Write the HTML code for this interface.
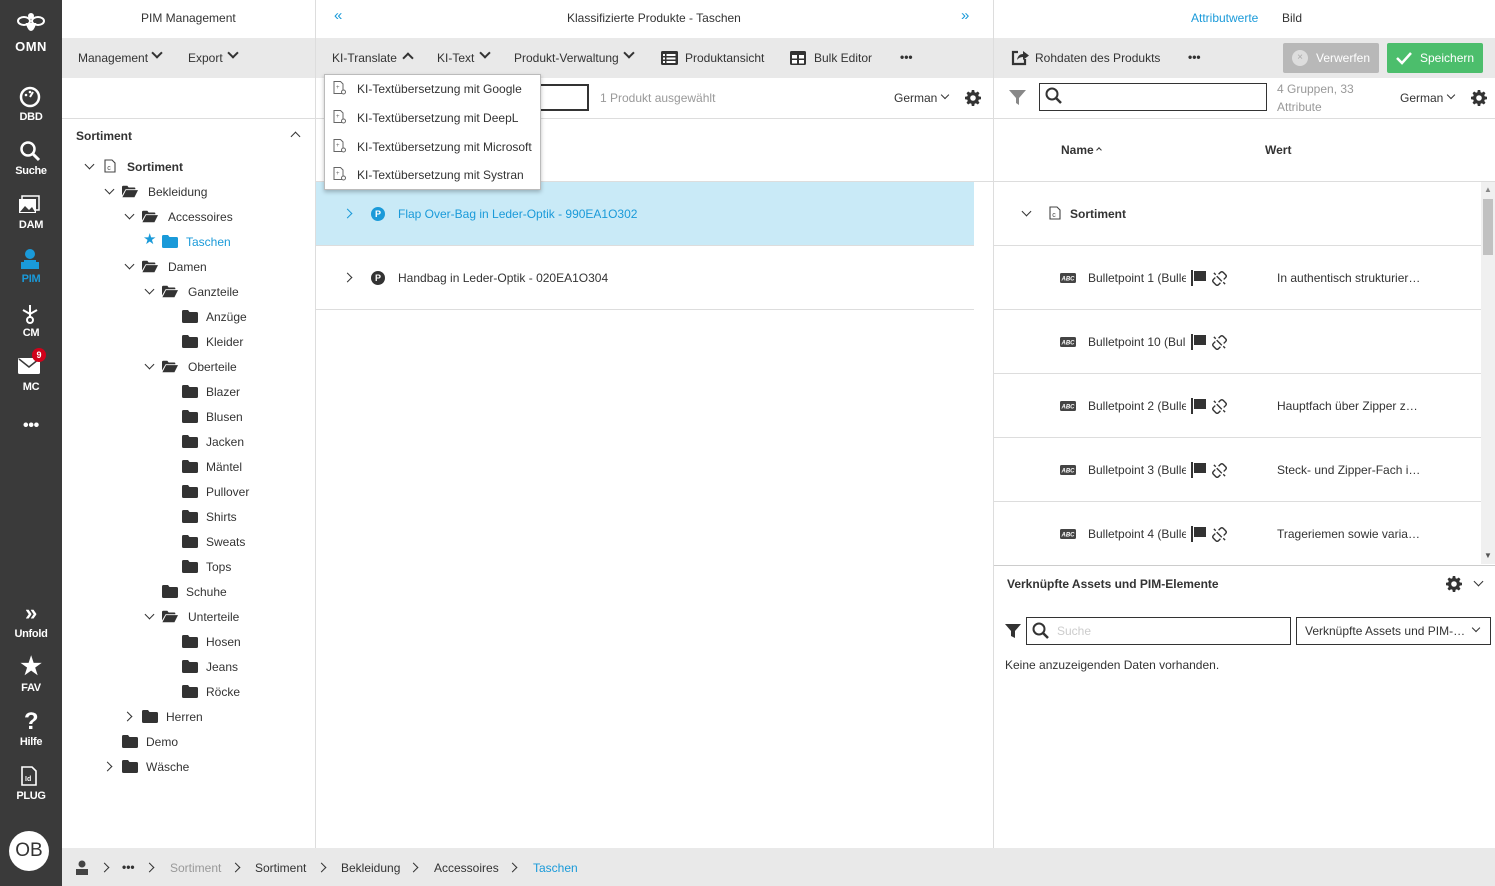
<!DOCTYPE html>
<html><head><meta charset="utf-8"><style>
*{box-sizing:border-box;margin:0;padding:0}
body{width:1495px;height:886px;overflow:hidden;font-family:"Liberation Sans",sans-serif;font-size:12px;color:#333;background:#fff;position:relative}
.a{position:absolute}
.sb{left:0;top:0;width:62px;height:886px;background:#3a3a3a;color:#fff}
.sbi{position:absolute;left:0;width:62px;text-align:center;font-size:11px;font-weight:bold;letter-spacing:-.3px}
.grey{background:#e9e9e9}
.t{position:absolute;white-space:nowrap;line-height:14px}
.fold{position:absolute;width:16px;height:13px}
.hl{position:absolute;height:1px;background:#ddd}
.vl{position:absolute;width:1px;background:#ddd}
.chev{position:absolute;width:7px;height:7px;border-right:1.6px solid #333;border-bottom:1.6px solid #333}
.down{transform:rotate(45deg)}
.right{transform:rotate(-45deg)}
.tb{width:8px;height:8px;border-right:2.2px solid #333;border-bottom:2.2px solid #333}
</style></head><body>
<svg width="0" height="0" style="position:absolute"><defs>
<symbol id="fc" viewBox="0 0 16 13"><path d="M0 1.5Q0 0 1.5 0H6l1.5 2H14.5Q16 2 16 3.5V11.5Q16 13 14.5 13H1.5Q0 13 0 11.5Z" fill="#333"/></symbol>
<symbol id="fo" viewBox="0 0 18 13"><path d="M0 1.5Q0 0 1.5 0H6l1.5 2H14Q15 2 15 3V4H4L0 11Z" fill="#333"/><path d="M4.5 5H18L14 13H0.5Z" fill="#333"/></symbol>
<symbol id="doc" viewBox="0 0 12 14"><path d="M1 1H8L11 4V13H1Z" fill="none" stroke="#444" stroke-width="1.1"/><text x="3.2" y="11" font-size="7" font-family="Liberation Sans" fill="#444">c</text></symbol>
<symbol id="gear" viewBox="0 0 16 16"><path fill="#333" d="M6.8 0h2.4l.4 2.2 1.3.6 1.9-1.3 1.7 1.7-1.3 1.9.6 1.3 2.2.4v2.4l-2.2.4-.6 1.3 1.3 1.9-1.7 1.7-1.9-1.3-1.3.6-.4 2.2H6.8l-.4-2.2-1.3-.6-1.9 1.3-1.7-1.7 1.3-1.9-.6-1.3L0 9.2V6.8l2.2-.4.6-1.3-1.3-1.9 1.7-1.7 1.9 1.3 1.3-.6zM8 5.2A2.8 2.8 0 1 0 8 10.8 2.8 2.8 0 1 0 8 5.2z"/></symbol>
<symbol id="abc" viewBox="0 0 16 10"><rect width="16" height="10" rx="1.5" fill="#444"/><text x="1.5" y="7.5" font-size="6" font-weight="bold" font-style="italic" font-family="Liberation Sans" fill="#fff">ABC</text></symbol>
<symbol id="flag" viewBox="0 0 18 16"><rect x="0" y="0" width="2" height="16" fill="#333"/><path d="M3 1H15V11H3Z" fill="#333"/></symbol>
<symbol id="unl" viewBox="0 0 16 16"><g fill="none" stroke="#333" stroke-width="1.5"><path d="M5 5.5L10.5 11"/><path d="M7 3.5L9 1.5Q10.5 0 12 1.5L14.5 4Q16 5.5 14.5 7L12.5 9M9 12.5L7 14.5Q5.5 16 4 14.5L1.5 12Q0 10.5 1.5 9L3.5 7"/><path d="M2 2L4 4M12 12L14 14"/></g></symbol>
<symbol id="kdoc" viewBox="0 0 14 14"><path d="M1 .5H7.5L10 3V12.5H1Z" fill="none" stroke="#666"/><text x="3" y="8" font-size="6" fill="#666">+</text><circle cx="10.5" cy="11" r="2" fill="#fff" stroke="#666"/></symbol>
</defs></svg>

<div class="a sb">
 <svg class="a" style="left:16px;top:10px" width="30" height="26" viewBox="0 0 30 26"><g fill="none" stroke="#fff" stroke-width="2"><ellipse cx="8" cy="11" rx="6" ry="4"/><ellipse cx="22" cy="11" rx="6" ry="4"/><path d="M11 14Q15 26 19 14Z" fill="#fff"/></g><circle cx="15" cy="6" r="3" fill="#fff"/></svg>
 <div class="sbi" style="top:39px;font-size:13px;letter-spacing:.5px">OMN</div>
 <svg class="a" style="left:19px;top:86px" width="22" height="22" viewBox="0 0 22 22"><circle cx="11" cy="11" r="9" fill="none" stroke="#fff" stroke-width="2.5"/><path d="M11 11L14 6" stroke="#fff" stroke-width="2"/><circle cx="7" cy="9" r="1.3" fill="#fff"/><circle cx="11" cy="6" r="1.3" fill="#fff"/></svg>
 <div class="sbi" style="top:111px">DBD</div>
 <svg class="a" style="left:19px;top:140px" width="22" height="22" viewBox="0 0 22 22"><circle cx="9" cy="9" r="6.5" fill="none" stroke="#fff" stroke-width="2.5"/><path d="M14 14L20 20" stroke="#fff" stroke-width="3"/></svg>
 <div class="sbi" style="top:165px">Suche</div>
 <svg class="a" style="left:18px;top:195px" width="22" height="20" viewBox="0 0 22 20"><rect x="1" y="4" width="17" height="14" fill="#fff"/><rect x="4" y="1" width="17" height="14" fill="none" stroke="#fff" stroke-width="1.5"/><path d="M2 17L7 11L11 15L14 12L17 17Z" fill="#3a3a3a"/></svg>
 <div class="sbi" style="top:219px">DAM</div>
 <svg class="a" style="left:20px;top:248px" width="20" height="22" viewBox="0 0 20 22"><circle cx="10" cy="6" r="5" fill="#1a9ad9"/><path d="M1 14H19V21H1Z" fill="#1a9ad9"/><path d="M4 12H16V14H4Z" fill="#1a9ad9"/></svg>
 <div class="sbi" style="top:273px;color:#1a9ad9">PIM</div>
 <svg class="a" style="left:20px;top:303px" width="20" height="22" viewBox="0 0 20 22"><g stroke="#fff" stroke-width="2" fill="none"><path d="M10 2V14M3 7L10 11L17 7"/><circle cx="10" cy="17" r="3"/></g></svg>
 <div class="sbi" style="top:327px">CM</div>
 <svg class="a" style="left:18px;top:358px" width="22" height="16" viewBox="0 0 22 16"><rect width="22" height="16" rx="1.5" fill="#fff"/><path d="M1 1L11 9L21 1" stroke="#3a3a3a" stroke-width="1.5" fill="none"/></svg>
 <div class="a" style="left:32px;top:348px;width:14px;height:14px;border-radius:7px;background:#d0021b;color:#fff;font-size:9px;font-weight:bold;text-align:center;line-height:14px">9</div>
 <div class="sbi" style="top:381px">MC</div>
 <div class="sbi" style="top:417px;font-size:16px">•••</div>
 <div class="sbi" style="top:600px;font-size:22px;font-weight:bold">»</div>
 <div class="sbi" style="top:628px">Unfold</div>
 <div class="sbi" style="top:652px;font-size:24px">★</div>
 <div class="sbi" style="top:682px">FAV</div>
 <div class="sbi" style="top:708px;font-size:24px">?</div>
 <div class="sbi" style="top:736px">Hilfe</div>
 <svg class="a" style="left:21px;top:766px" width="16" height="20" viewBox="0 0 16 20"><path d="M1 1H11L15 5V19H1Z" fill="none" stroke="#fff" stroke-width="1.6"/><text x="4" y="15" font-size="7" font-weight="bold" font-family="Liberation Sans" fill="#fff">Id</text></svg>
 <div class="sbi" style="top:790px">PLUG</div>
 <div class="a" style="left:9px;top:831px;width:40px;height:40px;border-radius:20px;background:#fff;color:#333;font-size:19px;text-align:center;line-height:40px">OB</div>
</div>

<div class="t" style="left:141px;top:11px">PIM Management</div>
<div class="t" style="left:567px;top:11px">Klassifizierte Produkte - Taschen</div>
<div class="t" style="left:334px;top:9px;color:#1a9ad9;font-size:15px">«</div>
<div class="t" style="left:961px;top:9px;color:#1a9ad9;font-size:15px">»</div>
<div class="t" style="left:1191px;top:11px;color:#1a9ad9">Attributwerte</div>
<div class="t" style="left:1282px;top:11px">Bild</div>

<div class="a grey" style="left:62px;top:38px;width:1433px;height:40px"></div>
<div class="t" style="left:78px;top:51px">Management</div><div class="chev down tb" style="left:153px;top:49px"></div>
<div class="t" style="left:188px;top:51px">Export</div><div class="chev down tb" style="left:229px;top:49px"></div>
<div class="t" style="left:332px;top:51px">KI-Translate</div><div class="chev tb" style="left:404px;top:54px;transform:rotate(-135deg)"></div>
<div class="t" style="left:437px;top:51px">KI-Text</div><div class="chev down tb" style="left:481px;top:49px"></div>
<div class="t" style="left:514px;top:51px">Produkt-Verwaltung</div><div class="chev down tb" style="left:625px;top:49px"></div>
<svg class="a" style="left:661px;top:51px" width="17" height="14"><rect width="17" height="14" rx="1.5" fill="#333"/><g fill="#fff"><rect x="2" y="3" width="2" height="2"/><rect x="2" y="6.5" width="2" height="2"/><rect x="2" y="10" width="2" height="2"/><rect x="5.5" y="3" width="9" height="2"/><rect x="5.5" y="6.5" width="9" height="2"/><rect x="5.5" y="10" width="9" height="2"/></g></svg>
<div class="t" style="left:685px;top:51px">Produktansicht</div>
<svg class="a" style="left:790px;top:51px" width="16" height="14"><rect width="16" height="14" rx="1.5" fill="#333"/><g fill="#fff"><rect x="2" y="4" width="5" height="3.5"/><rect x="9" y="4" width="5" height="3.5"/><rect x="2" y="9" width="5" height="3.5"/><rect x="9" y="9" width="5" height="3.5"/></g></svg>
<div class="t" style="left:814px;top:51px">Bulk Editor</div>
<div class="t" style="left:900px;top:50px;font-size:12px;font-weight:bold">•••</div>
<svg class="a" style="left:1011px;top:49px" width="18" height="17" viewBox="0 0 18 17"><path d="M7 3H2V15H14V10" fill="none" stroke="#333" stroke-width="2.2"/><path d="M6 11Q7 5 12 5V2L18 6.5L12 11V8Q8 8 6 11Z" fill="#333"/></svg>
<div class="t" style="left:1035px;top:51px">Rohdaten des Produkts</div>
<div class="t" style="left:1188px;top:50px;font-size:12px;font-weight:bold">•••</div>
<div class="a" style="left:1283px;top:43px;width:96px;height:30px;background:#b8b8b8;border-radius:2px"></div>
<div class="a" style="left:1292px;top:50px;width:16px;height:16px;border-radius:8px;background:#ddd;color:#aaa;font-size:10px;text-align:center;line-height:16px">×</div>
<div class="t" style="left:1316px;top:51px;color:#fff">Verwerfen</div>
<div class="a" style="left:1387px;top:43px;width:96px;height:30px;background:#4cbe6c;border-radius:2px"></div>
<svg class="a" style="left:1396px;top:51px" width="16" height="14"><path d="M1 7L6 12L15 2" fill="none" stroke="#fff" stroke-width="2.5"/></svg>
<div class="t" style="left:1420px;top:51px;color:#fff">Speichern</div>

<div class="vl" style="left:315px;top:0;height:848px"></div>
<div class="vl" style="left:993px;top:0;height:848px"></div>
<div class="hl" style="left:62px;top:118px;width:1433px"></div>

<div class="t" style="left:76px;top:129px;font-weight:bold">Sortiment</div>
<div class="chev" style="left:292px;top:133px;transform:rotate(-135deg)"></div>
<div class="chev down" style="left:86px;top:161px"></div>
<svg class="a" style="left:104px;top:159px" width="12" height="14"><use href="#doc"/></svg>
<div class="t" style="left:127px;top:160px;font-weight:bold">Sortiment</div>

<div class="chev down" style="left:106px;top:186px"></div><svg class="fold" style="left:122px;top:185px" width="18"><use href="#fo"/></svg><div class="t" style="left:148px;top:185px">Bekleidung</div>
<div class="chev down" style="left:126px;top:211px"></div><svg class="fold" style="left:142px;top:210px" width="18"><use href="#fo"/></svg><div class="t" style="left:168px;top:210px">Accessoires</div>
<div class="t" style="left:143px;top:233px;color:#1a9ad9;font-size:15px">★</div><svg class="fold" style="left:162px;top:235px"><path d="M0 1.5Q0 0 1.5 0H6l1.5 2H14.5Q16 2 16 3.5V11.5Q16 13 14.5 13H1.5Q0 13 0 11.5Z" fill="#1a9ad9"/></svg><div class="t" style="left:186px;top:235px;color:#1a9ad9">Taschen</div>
<div class="chev down" style="left:126px;top:261px"></div><svg class="fold" style="left:142px;top:260px" width="18"><use href="#fo"/></svg><div class="t" style="left:168px;top:260px">Damen</div>
<div class="chev down" style="left:146px;top:286px"></div><svg class="fold" style="left:162px;top:285px" width="18"><use href="#fo"/></svg><div class="t" style="left:188px;top:285px">Ganzteile</div>
<svg class="fold" style="left:182px;top:310px"><use href="#fc"/></svg><div class="t" style="left:206px;top:310px">Anzüge</div>
<svg class="fold" style="left:182px;top:335px"><use href="#fc"/></svg><div class="t" style="left:206px;top:335px">Kleider</div>
<div class="chev down" style="left:146px;top:361px"></div><svg class="fold" style="left:162px;top:360px" width="18"><use href="#fo"/></svg><div class="t" style="left:188px;top:360px">Oberteile</div>
<svg class="fold" style="left:182px;top:385px"><use href="#fc"/></svg><div class="t" style="left:206px;top:385px">Blazer</div>
<svg class="fold" style="left:182px;top:410px"><use href="#fc"/></svg><div class="t" style="left:206px;top:410px">Blusen</div>
<svg class="fold" style="left:182px;top:435px"><use href="#fc"/></svg><div class="t" style="left:206px;top:435px">Jacken</div>
<svg class="fold" style="left:182px;top:460px"><use href="#fc"/></svg><div class="t" style="left:206px;top:460px">Mäntel</div>
<svg class="fold" style="left:182px;top:485px"><use href="#fc"/></svg><div class="t" style="left:206px;top:485px">Pullover</div>
<svg class="fold" style="left:182px;top:510px"><use href="#fc"/></svg><div class="t" style="left:206px;top:510px">Shirts</div>
<svg class="fold" style="left:182px;top:535px"><use href="#fc"/></svg><div class="t" style="left:206px;top:535px">Sweats</div>
<svg class="fold" style="left:182px;top:560px"><use href="#fc"/></svg><div class="t" style="left:206px;top:560px">Tops</div>
<svg class="fold" style="left:162px;top:585px"><use href="#fc"/></svg><div class="t" style="left:186px;top:585px">Schuhe</div>
<div class="chev down" style="left:146px;top:611px"></div><svg class="fold" style="left:162px;top:610px" width="18"><use href="#fo"/></svg><div class="t" style="left:188px;top:610px">Unterteile</div>
<svg class="fold" style="left:182px;top:635px"><use href="#fc"/></svg><div class="t" style="left:206px;top:635px">Hosen</div>
<svg class="fold" style="left:182px;top:660px"><use href="#fc"/></svg><div class="t" style="left:206px;top:660px">Jeans</div>
<svg class="fold" style="left:182px;top:685px"><use href="#fc"/></svg><div class="t" style="left:206px;top:685px">Röcke</div>
<div class="chev right" style="left:124px;top:713px"></div><svg class="fold" style="left:142px;top:710px"><use href="#fc"/></svg><div class="t" style="left:166px;top:710px">Herren</div>
<svg class="fold" style="left:122px;top:735px"><use href="#fc"/></svg><div class="t" style="left:146px;top:735px">Demo</div>
<div class="chev right" style="left:104px;top:763px"></div><svg class="fold" style="left:122px;top:760px"><use href="#fc"/></svg><div class="t" style="left:146px;top:760px">Wäsche</div>

<div class="a" style="left:460px;top:84px;width:129px;height:27px;border:2px solid #333"></div>
<div class="t" style="left:600px;top:91px;color:#999">1 Produkt ausgewählt</div>
<div class="t" style="left:894px;top:91px">German</div><div class="chev down" style="left:942px;top:92px;width:6px;height:6px;border-width:1.2px"></div>
<svg class="a" style="left:965px;top:90px" width="16" height="16"><use href="#gear"/></svg>
<div class="hl" style="left:316px;top:181px;width:677px"></div>
<div class="a" style="left:316px;top:182px;width:658px;height:63px;background:#c9eaf7"></div>
<div class="chev right" style="left:344px;top:210px;border-color:#1a9ad9"></div>
<div class="a" style="left:371px;top:207px;width:14px;height:14px;border-radius:7px;background:#1a9ad9;color:#fff;font-size:9px;font-weight:bold;text-align:center;line-height:14px">P</div>
<div class="t" style="left:398px;top:207px;color:#1a9ad9">Flap Over-Bag in Leder-Optik - 990EA1O302</div>
<div class="hl" style="left:316px;top:245px;width:658px"></div>
<div class="chev right" style="left:344px;top:274px"></div>
<div class="a" style="left:371px;top:271px;width:14px;height:14px;border-radius:7px;background:#333;color:#fff;font-size:9px;font-weight:bold;text-align:center;line-height:14px">P</div>
<div class="t" style="left:398px;top:271px">Handbag in Leder-Optik - 020EA1O304</div>
<div class="hl" style="left:316px;top:309px;width:658px"></div>

<div class="a" style="left:324px;top:74px;width:217px;height:116px;background:#fff;border:1px solid #bbb;box-shadow:0 2px 4px rgba(0,0,0,.25)"></div>
<svg class="a" style="left:333px;top:81px" width="14" height="14"><use href="#kdoc"/></svg><div class="t" style="left:357px;top:82px">KI-Textübersetzung mit Google</div>
<svg class="a" style="left:333px;top:110px" width="14" height="14"><use href="#kdoc"/></svg><div class="t" style="left:357px;top:111px">KI-Textübersetzung mit DeepL</div>
<svg class="a" style="left:333px;top:139px" width="14" height="14"><use href="#kdoc"/></svg><div class="t" style="left:357px;top:140px">KI-Textübersetzung mit Microsoft</div>
<svg class="a" style="left:333px;top:167px" width="14" height="14"><use href="#kdoc"/></svg><div class="t" style="left:357px;top:168px">KI-Textübersetzung mit Systran</div>

<svg class="a" style="left:1009px;top:90px" width="17" height="15"><path d="M0 0H17L10 8V15L7 13V8Z" fill="#888"/></svg>
<div class="a" style="left:1039px;top:83px;width:228px;height:28px;border:1.5px solid #333"></div>
<svg class="a" style="left:1045px;top:87px" width="18" height="18"><circle cx="7" cy="7" r="5.5" fill="none" stroke="#333" stroke-width="2"/><path d="M11 11L16 16" stroke="#333" stroke-width="2.5"/></svg>
<div class="t" style="left:1277px;top:82px;color:#999">4 Gruppen, 33</div>
<div class="t" style="left:1277px;top:100px;color:#999">Attribute</div>
<div class="t" style="left:1400px;top:91px">German</div><div class="chev down" style="left:1448px;top:92px;width:6px;height:6px;border-width:1.2px"></div>
<svg class="a" style="left:1471px;top:90px" width="16" height="16"><use href="#gear"/></svg>
<div class="t" style="left:1061px;top:143px;font-weight:bold">Name</div><div class="chev" style="left:1097px;top:148px;width:4px;height:4px;border-width:1.2px;transform:rotate(-135deg)"></div>
<div class="t" style="left:1265px;top:143px;font-weight:bold">Wert</div>
<div class="hl" style="left:994px;top:181px;width:501px"></div>
<div class="a" style="left:1481px;top:182px;width:14px;height:382px;background:#f0f0f0"></div>
<div class="a" style="left:1483px;top:199px;width:10px;height:56px;background:#c1c1c1"></div>
<div class="t" style="left:1484px;top:183px;font-size:8px;color:#888">▲</div>
<div class="t" style="left:1484px;top:549px;font-size:8px;color:#555">▼</div>

<div class="chev down" style="left:1023px;top:208px"></div>
<svg class="a" style="left:1049px;top:206px" width="12" height="14"><use href="#doc"/></svg>
<div class="t" style="left:1070px;top:207px;font-weight:bold">Sortiment</div>
<div class="hl" style="left:994px;top:245px;width:487px"></div>

<svg class="a" style="left:1060px;top:273px" width="16" height="10"><use href="#abc"/></svg><div class="t" style="left:1088px;top:271px;width:98px;overflow:hidden">Bulletpoint 1 (Bulletpoint)</div><svg class="a" style="left:1191px;top:270px" width="18" height="16"><use href="#flag"/></svg><svg class="a" style="left:1212px;top:271px" width="15" height="15"><use href="#unl"/></svg><div class="t" style="left:1277px;top:271px">In authentisch strukturier…</div>
<div class="hl" style="left:994px;top:309px;width:487px"></div>
<svg class="a" style="left:1060px;top:337px" width="16" height="10"><use href="#abc"/></svg><div class="t" style="left:1088px;top:335px;width:98px;overflow:hidden">Bulletpoint 10 (Bulletpoint)</div><svg class="a" style="left:1191px;top:334px" width="18" height="16"><use href="#flag"/></svg><svg class="a" style="left:1212px;top:335px" width="15" height="15"><use href="#unl"/></svg>
<div class="hl" style="left:994px;top:373px;width:487px"></div>
<svg class="a" style="left:1060px;top:401px" width="16" height="10"><use href="#abc"/></svg><div class="t" style="left:1088px;top:399px;width:98px;overflow:hidden">Bulletpoint 2 (Bulletpoint)</div><svg class="a" style="left:1191px;top:398px" width="18" height="16"><use href="#flag"/></svg><svg class="a" style="left:1212px;top:399px" width="15" height="15"><use href="#unl"/></svg><div class="t" style="left:1277px;top:399px">Hauptfach über Zipper z…</div>
<div class="hl" style="left:994px;top:437px;width:487px"></div>
<svg class="a" style="left:1060px;top:465px" width="16" height="10"><use href="#abc"/></svg><div class="t" style="left:1088px;top:463px;width:98px;overflow:hidden">Bulletpoint 3 (Bulletpoint)</div><svg class="a" style="left:1191px;top:462px" width="18" height="16"><use href="#flag"/></svg><svg class="a" style="left:1212px;top:463px" width="15" height="15"><use href="#unl"/></svg><div class="t" style="left:1277px;top:463px">Steck- und Zipper-Fach i…</div>
<div class="hl" style="left:994px;top:501px;width:487px"></div>
<svg class="a" style="left:1060px;top:529px" width="16" height="10"><use href="#abc"/></svg><div class="t" style="left:1088px;top:527px;width:98px;overflow:hidden">Bulletpoint 4 (Bulletpoint)</div><svg class="a" style="left:1191px;top:526px" width="18" height="16"><use href="#flag"/></svg><svg class="a" style="left:1212px;top:527px" width="15" height="15"><use href="#unl"/></svg><div class="t" style="left:1277px;top:527px">Trageriemen sowie varia…</div>

<div class="hl" style="left:994px;top:565px;width:501px;background:#ccc"></div>
<div class="t" style="left:1007px;top:577px;font-weight:bold">Verknüpfte Assets und PIM-Elemente</div>
<svg class="a" style="left:1446px;top:576px" width="16" height="16"><use href="#gear"/></svg>
<div class="chev down" style="left:1475px;top:578px;width:7px;height:7px;border-width:1.3px"></div>
<svg class="a" style="left:1005px;top:624px" width="16" height="14"><path d="M0 0H16L10 7V14L6 12V7Z" fill="#333"/></svg>
<div class="a" style="left:1026px;top:617px;width:265px;height:28px;border:1.5px solid #333"></div>
<svg class="a" style="left:1032px;top:622px" width="18" height="18"><circle cx="7" cy="7" r="5.5" fill="none" stroke="#333" stroke-width="2"/><path d="M11 11L16 16" stroke="#333" stroke-width="2.5"/></svg>
<div class="t" style="left:1057px;top:624px;color:#ccc">Suche</div>
<div class="a" style="left:1296px;top:617px;width:195px;height:28px;border:1px solid #333"></div>
<div class="t" style="left:1305px;top:624px">Verknüpfte Assets und PIM-…</div>
<div class="chev down" style="left:1473px;top:625px;width:6px;height:6px;border-width:1.2px"></div>
<div class="t" style="left:1005px;top:658px">Keine anzuzeigenden Daten vorhanden.</div>

<div class="a grey" style="left:62px;top:848px;width:1433px;height:38px"></div>
<svg class="a" style="left:75px;top:860px" width="14" height="16" viewBox="0 0 14 16"><circle cx="7" cy="4" r="3.5" fill="#444"/><path d="M1 9H13V15H1Z" fill="#444"/></svg>
<div class="chev right" style="left:101px;top:864px;border-width:1.8px"></div>
<div class="t" style="left:122px;top:860px;font-weight:bold">•••</div>
<div class="chev right" style="left:146px;top:864px;border-width:1.8px"></div>
<div class="t" style="left:170px;top:861px;color:#999">Sortiment</div>
<div class="chev right" style="left:232px;top:864px;border-width:1.8px"></div>
<div class="t" style="left:255px;top:861px">Sortiment</div>
<div class="chev right" style="left:318px;top:864px;border-width:1.8px"></div>
<div class="t" style="left:341px;top:861px">Bekleidung</div>
<div class="chev right" style="left:410px;top:864px;border-width:1.8px"></div>
<div class="t" style="left:434px;top:861px">Accessoires</div>
<div class="chev right" style="left:509px;top:864px;border-width:1.8px"></div>
<div class="t" style="left:533px;top:861px;color:#1a9ad9">Taschen</div>
</body></html>
